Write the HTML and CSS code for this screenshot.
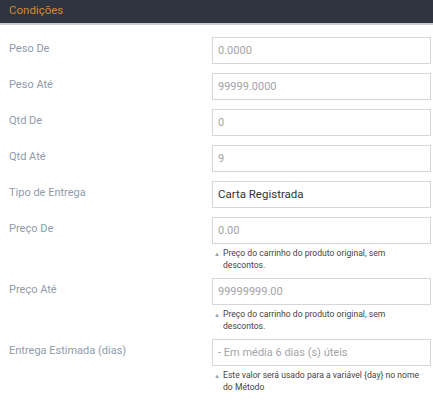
FILE: index.html
```html
<!DOCTYPE html>
<html lang="pt">
<head>
<meta charset="utf-8">
<link rel="stylesheet" href="styles.css">
</head>
<body>
<div class="panel">
  <div class="panel-head">Condições</div>
  <div class="panel-body">
    <div class="row">
      <label class="lbl">Peso De</label>
      <div class="field"><div class="input ph">0.0000</div></div>
    </div>
    <div class="row">
      <label class="lbl">Peso Até</label>
      <div class="field"><div class="input ph">99999.0000</div></div>
    </div>
    <div class="row">
      <label class="lbl">Qtd De</label>
      <div class="field"><div class="input ph">0</div></div>
    </div>
    <div class="row">
      <label class="lbl">Qtd Até</label>
      <div class="field"><div class="input ph">9</div></div>
    </div>
    <div class="row">
      <label class="lbl">Tipo de Entrega</label>
      <div class="field"><div class="input val">Carta Registrada</div></div>
    </div>
    <div class="row has-help">
      <label class="lbl">Preço De</label>
      <div class="field">
        <div class="input ph">0.00</div>
        <div class="help"><span class="tri">▲</span><span>Preço do carrinho do produto original, sem descontos.</span></div>
      </div>
    </div>
    <div class="row has-help">
      <label class="lbl">Preço Até</label>
      <div class="field">
        <div class="input ph">99999999.00</div>
        <div class="help"><span class="tri">▲</span><span>Preço do carrinho do produto original, sem descontos.</span></div>
      </div>
    </div>
    <div class="row has-help">
      <label class="lbl">Entrega Estimada (dias)</label>
      <div class="field">
        <div class="input ph">- Em média 6 dias (s) úteis</div>
        <div class="help"><span class="tri">▲</span><span>Este valor será usado para a variável {day} no nome do Método</span></div>
      </div>
    </div>
  </div>
</div>
</body>
</html>
```
FILE: styles.css
```css
html, body {
  margin: 0;
  padding: 0;
  background: #fff;
}
body {
  font-family: Roboto, "Liberation Sans", sans-serif;
}
.panel-head {
  background: #2f3540;
  color: #d08a2c;
  font-size: 11.5px;
  line-height: 20px;
  padding-left: 9px;
  border-bottom: 2px solid #c9ccd1;
  box-sizing: border-box;
  height: 25px;
}
.panel-body {
  padding-top: 12px;
}
.row {
  display: flex;
  margin-bottom: 9px;
}
.row.has-help {
  margin-bottom: 7px;
}
.lbl {
  width: 212px;
  padding-left: 9px;
  box-sizing: border-box;
  padding-top: 5px;
  font-size: 11px;
  color: #8f9bab;
  line-height: 14px;
}
.field {
  width: 219px;
}
.input {
  height: 27px;
  box-sizing: border-box;
  border: 1px solid #d6d6da;
  font-size: 11px;
  padding: 0 5px;
  line-height: 25px;
}
.input.ph { color: #a3a3a8; }
.input.val { color: #333; font-size: 11.5px; }
.help {
  display: flex;
  font-size: 8.6px;
  line-height: 12px;
  color: #444;
  padding-top: 3px;
  padding-right: 2px;
}
.tri {
  font-size: 6px;
  color: #9aa0a8;
  width: 9px;
  flex: none;
  padding-left: 2px;
  line-height: 14px;
}
```
